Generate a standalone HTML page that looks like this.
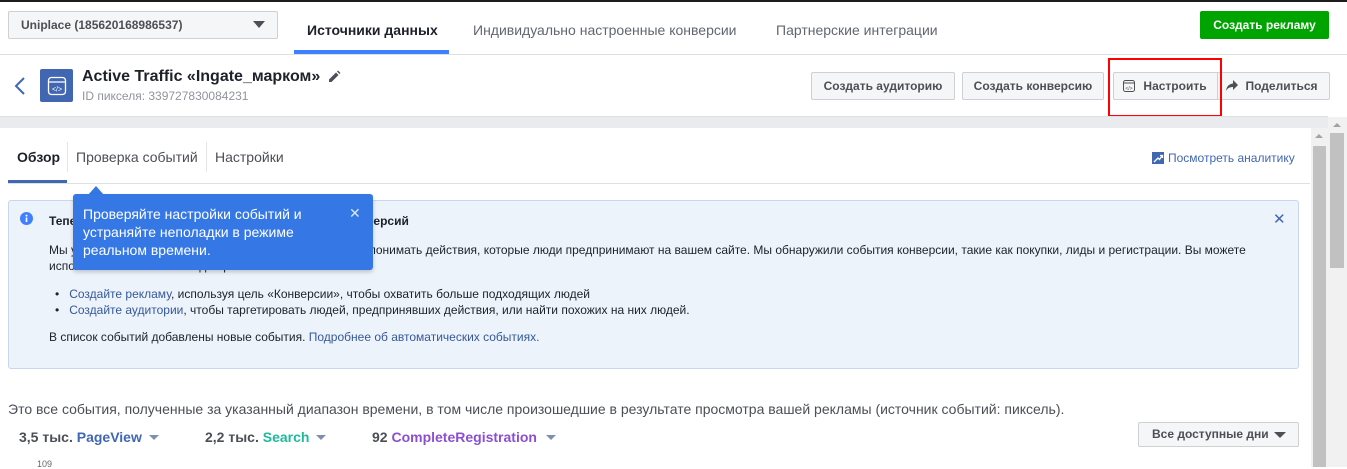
<!DOCTYPE html>
<html><head><meta charset="utf-8"><style>
*{box-sizing:border-box;margin:0;padding:0}
body{width:1347px;height:467px;overflow:hidden;background:#fff;font-family:"Liberation Sans",Arial,sans-serif;position:relative;color:#1d2129}
.a{position:absolute;white-space:nowrap}
.btn{position:absolute;height:28px;border:1px solid #ced0d4;background:#f5f6f7;border-radius:2px;font-size:12px;font-weight:bold;color:#4b4f56;line-height:26px;text-align:center}
.lnk{color:#365899}
</style></head><body>
<div class="a" style="left:0;top:0;width:1347px;height:2px;background:#1d1d1d"></div>
<div class="btn" style="left:8px;top:11px;width:270px;text-align:left;padding-left:12px;color:#4b4f56">Uniplace (185620168986537)</div>
<div class="a" style="left:253px;top:21px;border-left:6px solid transparent;border-right:6px solid transparent;border-top:7px solid #4b4f56"></div>
<div class="a" style="left:307px;top:22px;font-size:14px;font-weight:bold;color:#1d2129">Источники данных</div>
<div class="a" style="left:294px;top:50px;width:155px;height:4px;background:#4080ff"></div>
<div class="a" style="left:473px;top:22px;font-size:14px;color:#606770">Индивидуально настроенные конверсии</div>
<div class="a" style="left:776px;top:22px;font-size:14px;color:#606770">Партнерские интеграции</div>
<div class="a" style="left:1200px;top:11px;width:129px;height:28px;background:#00a400;border-radius:2px;color:#fff;font-size:12px;font-weight:bold;line-height:28px;text-align:center">Создать рекламу</div>
<div class="a" style="left:0;top:54px;width:1347px;height:1px;background:#dddfe2"></div>
<svg class="a" style="left:13px;top:76px" width="14" height="20"><path d="M11 2 L3 10 L11 18" stroke="#4267b2" stroke-width="2" fill="none"/></svg>
<div class="a" style="left:40px;top:69px;width:33px;height:33px;background:#4267b2;border-radius:2px"></div>
<svg class="a" style="left:47px;top:76px" width="20" height="20"><rect x="1.5" y="1.5" width="17" height="17" rx="3" stroke="#fff" stroke-width="1.3" fill="none"/><line x1="1.5" y1="6" x2="18.5" y2="6" stroke="#fff" stroke-width="1.2"/><text x="10" y="15.5" font-size="7" fill="#fff" text-anchor="middle" font-family="Liberation Sans">&lt;/&gt;</text></svg>
<div class="a" style="left:82px;top:68px;font-size:16px;font-weight:bold;color:#1d2129">Active Traffic «Ingate_марком»</div>
<svg class="a" style="left:327px;top:70px" width="14" height="14"><path d="M2 12 L2 9.5 L9 2.5 L11.5 5 L4.5 12 Z M10 1.5 L11 0.5 L13.5 3 L12.5 4 Z" fill="#4b4f56"/></svg>
<div class="a" style="left:82px;top:89px;font-size:12px;color:#90949c">ID пикселя: 339727830084231</div>
<div class="btn" style="left:811px;top:72px;width:144px">Создать аудиторию</div>
<div class="btn" style="left:962px;top:72px;width:142px">Создать конверсию</div>
<div class="btn" style="left:1113px;top:72px;width:106px;padding-left:18px">Настроить</div>
<svg class="a" style="left:1123px;top:80px" width="12" height="12"><rect x="0.5" y="0.5" width="11" height="11" rx="2" stroke="#4b4f56" fill="none"/><line x1="0.5" y1="3" x2="11.5" y2="3" stroke="#4b4f56"/><text x="6" y="10" font-size="5" fill="#4b4f56" text-anchor="middle">&lt;/&gt;</text></svg>
<div class="btn" style="left:1217px;top:72px;width:113px;padding-left:16px">Поделиться</div>
<svg class="a" style="left:1225px;top:79px" width="14" height="13"><path d="M8 1 L13 6 L8 11 L8 8 C5 8 2.5 9 1 12 C1.5 7.5 4 5 8 4.5 Z" fill="#4b4f56"/></svg>
<div class="a" style="left:1108px;top:58px;width:114px;height:59px;border:2px solid #f00"></div>
<div class="a" style="left:0;top:116px;width:1328px;height:12px;background:#e9ebee;border-top:1px solid #dddfe2"></div>
<div class="a" style="left:1328px;top:117px;width:19px;height:350px;background:#f1f1f1"></div>
<div class="a" style="left:1333px;top:123px;border-left:4px solid transparent;border-right:4px solid transparent;border-bottom:4px solid #a3a3a3"></div>
<div class="a" style="left:1330px;top:133px;width:14px;height:135px;background:#c1c1c1"></div>
<div class="a" style="left:1311px;top:128px;width:17px;height:339px;background:#f1f1f1"></div>
<div class="a" style="left:1315px;top:134px;border-left:4px solid transparent;border-right:4px solid transparent;border-bottom:4px solid #a3a3a3"></div>
<div class="a" style="left:1313px;top:146px;width:13px;height:321px;background:#c1c1c1"></div>
<div class="a" style="left:17px;top:149px;font-size:14px;font-weight:bold;color:#1d2129">Обзор</div>
<div class="a" style="left:8px;top:180px;width:59px;height:3px;background:#4267b2"></div>
<div class="a" style="left:67px;top:142px;width:1px;height:30px;background:#e5e5e5"></div>
<div class="a" style="left:76px;top:149px;font-size:14px;color:#4b4f56">Проверка событий</div>
<div class="a" style="left:206px;top:142px;width:1px;height:30px;background:#e5e5e5"></div>
<div class="a" style="left:215px;top:149px;font-size:14px;color:#4b4f56">Настройки</div>
<svg class="a" style="left:1152px;top:152px" width="12" height="12"><rect width="12" height="12" fill="#4267b2"/><path d="M2 10 L6 6 L7.5 7.5 L10 4 M8 3.5 L10.5 3.5 L10.5 6" stroke="#fff" stroke-width="1.3" fill="none"/></svg>
<div class="a" style="left:1168px;top:151px;font-size:12px;color:#4267b2">Посмотреть аналитику</div>
<div class="a" style="left:8px;top:183px;width:1302px;height:1px;background:#dddfe2"></div>
<div class="a" style="left:8px;top:200px;width:1291px;height:169px;background:#ecf3fb;border:1px solid #c8d7ec;border-radius:3px"></div>
<svg class="a" style="left:20px;top:212px" width="13" height="13"><circle cx="6.5" cy="6.5" r="6.5" fill="#4080ff"/><rect x="5.7" y="5.5" width="1.6" height="4.5" fill="#fff"/><circle cx="6.5" cy="3.6" r="1" fill="#fff"/></svg>
<div class="a" style="left:49px;top:214px;font-size:12px;font-weight:bold">Теперь пиксель автоматически находит события конверсий</div>
<div class="a" style="left:1273px;top:210px;font-size:15px;color:#4267b2">✕</div>
<div class="a" style="left:49px;top:242px;font-size:12px;line-height:16px;color:#1d2129">Мы усовершенствовали пиксель Facebook, чтобы лучше понимать действия, которые люди предпринимают на вашем сайте. Мы обнаружили события конверсии, такие как покупки, лиды и регистрации. Вы можете<br>использовать эти события для рекламы на Facebook:</div>
<div class="a" style="left:55px;top:286px;font-size:12px;line-height:16px">•&nbsp;&nbsp;&nbsp;<span class="lnk">Создайте рекламу</span>, используя цель «Конверсии», чтобы охватить больше подходящих людей<br>•&nbsp;&nbsp;&nbsp;<span class="lnk">Создайте аудитории</span>, чтобы таргетировать людей, предпринявших действия, или найти похожих на них людей.</div>
<div class="a" style="left:49px;top:330px;font-size:12px">В список событий добавлены новые события. <span class="lnk">Подробнее об автоматических событиях.</span></div>
<div class="a" style="left:88px;top:186px;border-left:8px solid transparent;border-right:8px solid transparent;border-bottom:9px solid #3578e5"></div>
<div class="a" style="left:73px;top:194px;width:300px;height:76px;background:#3578e5;border-radius:3px;box-shadow:0 2px 4px rgba(0,0,0,.2)"></div>
<div class="a" style="left:83px;top:205px;font-size:14px;line-height:18px;color:#fff">Проверяйте настройки событий и<br>устраняйте неполадки в режиме<br>реальном времени.</div>
<div class="a" style="left:349px;top:205px;font-size:14px;color:#dbe6fa">✕</div>
<div class="a" style="left:8px;top:401px;font-size:14px;color:#4b4f56">Это все события, полученные за указанный диапазон времени, в том числе произошедшие в результате просмотра вашей рекламы (источник событий: пиксель).</div>
<div class="a" style="left:19px;top:429px;font-size:14px;font-weight:bold;color:#4b4f56">3,5 тыс. <span style="color:#4267b2">PageView</span></div>
<div class="a" style="left:149px;top:435px;border-left:5px solid transparent;border-right:5px solid transparent;border-top:5px solid #7f8fb0"></div>
<div class="a" style="left:205px;top:429px;font-size:14px;font-weight:bold;color:#4b4f56">2,2 тыс. <span style="color:#20b99e">Search</span></div>
<div class="a" style="left:316px;top:435px;border-left:5px solid transparent;border-right:5px solid transparent;border-top:5px solid #7f8fb0"></div>
<div class="a" style="left:372px;top:429px;font-size:14px;font-weight:bold;color:#4b4f56">92 <span style="color:#8c4fd0">CompleteRegistration</span></div>
<div class="a" style="left:546px;top:435px;border-left:5px solid transparent;border-right:5px solid transparent;border-top:5px solid #7f8fb0"></div>
<div class="btn" style="left:1138px;top:422px;width:161px;height:25px;line-height:23px;text-align:left;padding-left:13px">Все доступные дни</div>
<div class="a" style="left:1274px;top:432px;border-left:6px solid transparent;border-right:6px solid transparent;border-top:6px solid #4b4f56"></div>
<div class="a" style="left:37px;top:459px;font-size:9px;color:#606770">109</div>
</body></html>
